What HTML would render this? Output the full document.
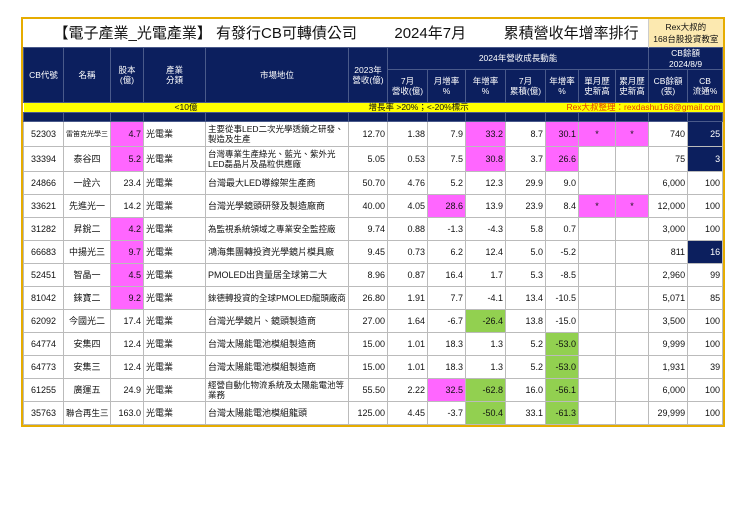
<!DOCTYPE html>
<html><head><meta charset="utf-8"><style>
body{margin:0;background:#fff;width:740px;height:523px;position:relative;font-family:"Liberation Sans","Noto Sans CJK TC",sans-serif;}
.wrap{position:absolute;left:21px;top:17px;border:2px solid #e6ac00;}
table{border-collapse:collapse;table-layout:fixed;width:699px;}
td{padding:0 2px;font-size:9px;color:#111;border:1px solid #bbb;overflow:hidden;white-space:nowrap;line-height:11px;}
.h td{background:#0c1f5e;color:#fff;text-align:center;border:1px solid #4a5a8a;font-size:8.5px;line-height:10.5px;}
.r{text-align:right}.c{text-align:center}
.p{background:#ff66ff}.g{background:#92d050}.n{background:#0c1f5e;color:#fff}
.t td{border:none;background:#fff;font-size:15px;height:28px;}
.y td{background:#ffff00;height:9px;font-size:8.5px;line-height:9px;border:none}
.b td{background:#0c1f5e;height:8px;border:1px solid #4a5a8a}
.d td{height:22px}
.w{white-space:normal;font-size:8.5px;line-height:10.5px}
</style></head><body><div class="wrap">
<table>
<colgroup><col style="width:40px"><col style="width:47px"><col style="width:33px"><col style="width:62px"><col style="width:143px"><col style="width:39px"><col style="width:40px"><col style="width:38px"><col style="width:40px"><col style="width:40px"><col style="width:33px"><col style="width:37px"><col style="width:33px"><col style="width:39px"><col style="width:35px"></colgroup>
<tr class="t"><td colspan="13" style="padding-left:30px">【電子產業_光電產業】 有發行CB可轉債公司 &nbsp; &nbsp; &nbsp; &nbsp; 2024年7月 &nbsp; &nbsp; &nbsp; &nbsp; 累積營收年增率排行</td><td colspan="2" style="background:#fce9b0;font-size:8.5px;text-align:center;line-height:12px;border-left:1px solid #ccc">Rex大叔的<br>168台股投資教室</td></tr>
<tr class="h"><td rowspan="2" style="height:52px">CB代號</td><td rowspan="2">名稱</td><td rowspan="2">股本<br>(億)</td><td rowspan="2">產業<br>分類</td><td rowspan="2">市場地位</td><td rowspan="2">2023年<br>營收(億)</td><td colspan="7" style="height:17px">2024年營收成長動能</td><td colspan="2">CB餘額<br>2024/8/9</td></tr>
<tr class="h"><td style="height:32px">7月<br>營收(億)</td><td>月增率<br>%</td><td>年增率<br>%</td><td>7月<br>累積(億)</td><td>年增率<br>%</td><td>單月歷<br>史新高</td><td>累月歷<br>史新高</td><td>CB餘額<br>(張)</td><td>CB<br>流通%</td></tr>
<tr class="y"><td colspan="5" style="text-align:center">&lt;10億</td><td colspan="5" style="padding-left:20px;overflow:visible">增長率 &gt;20%；&lt;-20%標示</td><td colspan="5" style="color:#e04000;text-align:right;font-size:8.5px;padding-right:2px;overflow:visible">Rex大叔整理：rexdashu168@gmail.com</td></tr>
<tr class="b"><td></td><td></td><td></td><td></td><td></td><td></td><td></td><td></td><td></td><td></td><td></td><td></td><td></td><td></td><td></td></tr>
<tr class="d"><td class="c" style="height:24px">52303</td><td class="c" style="font-size:7px">雷笛克光學三</td><td class="r p">4.7</td><td>光電業</td><td class="w">主要從事LED二次光學透鏡之研發、製造及生產</td><td class="r">12.70</td><td class="r">1.38</td><td class="r">7.9</td><td class="r p">33.2</td><td class="r">8.7</td><td class="r p">30.1</td><td class="c p">*</td><td class="c p">*</td><td class="r">740</td><td class="r n">25</td></tr>
<tr class="d"><td class="c" style="height:24px">33394</td><td class="c">泰谷四</td><td class="r p">5.2</td><td>光電業</td><td class="w">台灣專業生產綠光、藍光、紫外光LED磊晶片及晶粒供應廠</td><td class="r">5.05</td><td class="r">0.53</td><td class="r">7.5</td><td class="r p">30.8</td><td class="r">3.7</td><td class="r p">26.6</td><td></td><td></td><td class="r">75</td><td class="r n">3</td></tr>
<tr class="d"><td class="c">24866</td><td class="c">一詮六</td><td class="r">23.4</td><td>光電業</td><td>台灣最大LED導線架生產商</td><td class="r">50.70</td><td class="r">4.76</td><td class="r">5.2</td><td class="r">12.3</td><td class="r">29.9</td><td class="r">9.0</td><td></td><td></td><td class="r">6,000</td><td class="r">100</td></tr>
<tr class="d"><td class="c">33621</td><td class="c">先進光一</td><td class="r">14.2</td><td>光電業</td><td>台灣光學鏡頭研發及製造廠商</td><td class="r">40.00</td><td class="r">4.05</td><td class="r p">28.6</td><td class="r">13.9</td><td class="r">23.9</td><td class="r">8.4</td><td class="c p">*</td><td class="c p">*</td><td class="r">12,000</td><td class="r">100</td></tr>
<tr class="d"><td class="c">31282</td><td class="c">昇銳二</td><td class="r p">4.2</td><td>光電業</td><td style="font-size:8.5px">為監視系統領域之專業安全監控廠</td><td class="r">9.74</td><td class="r">0.88</td><td class="r">-1.3</td><td class="r">-4.3</td><td class="r">5.8</td><td class="r">0.7</td><td></td><td></td><td class="r">3,000</td><td class="r">100</td></tr>
<tr class="d"><td class="c">66683</td><td class="c">中揚光三</td><td class="r p">9.7</td><td>光電業</td><td>鴻海集團轉投資光學鏡片模具廠</td><td class="r">9.45</td><td class="r">0.73</td><td class="r">6.2</td><td class="r">12.4</td><td class="r">5.0</td><td class="r">-5.2</td><td></td><td></td><td class="r">811</td><td class="r n">16</td></tr>
<tr class="d"><td class="c">52451</td><td class="c">智晶一</td><td class="r p">4.5</td><td>光電業</td><td>PMOLED出貨量居全球第二大</td><td class="r">8.96</td><td class="r">0.87</td><td class="r">16.4</td><td class="r">1.7</td><td class="r">5.3</td><td class="r">-8.5</td><td></td><td></td><td class="r">2,960</td><td class="r">99</td></tr>
<tr class="d"><td class="c">81042</td><td class="c">錸寶二</td><td class="r p">9.2</td><td>光電業</td><td style="font-size:8.5px">錸德轉投資的全球PMOLED龍頭廠商</td><td class="r">26.80</td><td class="r">1.91</td><td class="r">7.7</td><td class="r">-4.1</td><td class="r">13.4</td><td class="r">-10.5</td><td></td><td></td><td class="r">5,071</td><td class="r">85</td></tr>
<tr class="d"><td class="c">62092</td><td class="c">今國光二</td><td class="r">17.4</td><td>光電業</td><td>台灣光學鏡片、鏡頭製造商</td><td class="r">27.00</td><td class="r">1.64</td><td class="r">-6.7</td><td class="r g">-26.4</td><td class="r">13.8</td><td class="r">-15.0</td><td></td><td></td><td class="r">3,500</td><td class="r">100</td></tr>
<tr class="d"><td class="c">64774</td><td class="c">安集四</td><td class="r">12.4</td><td>光電業</td><td>台灣太陽能電池模組製造商</td><td class="r">15.00</td><td class="r">1.01</td><td class="r">18.3</td><td class="r">1.3</td><td class="r">5.2</td><td class="r g">-53.0</td><td></td><td></td><td class="r">9,999</td><td class="r">100</td></tr>
<tr class="d"><td class="c">64773</td><td class="c">安集三</td><td class="r">12.4</td><td>光電業</td><td>台灣太陽能電池模組製造商</td><td class="r">15.00</td><td class="r">1.01</td><td class="r">18.3</td><td class="r">1.3</td><td class="r">5.2</td><td class="r g">-53.0</td><td></td><td></td><td class="r">1,931</td><td class="r">39</td></tr>
<tr class="d"><td class="c">61255</td><td class="c">廣運五</td><td class="r">24.9</td><td>光電業</td><td class="w">經營自動化物流系統及太陽能電池等業務</td><td class="r">55.50</td><td class="r">2.22</td><td class="r p">32.5</td><td class="r g">-62.8</td><td class="r">16.0</td><td class="r g">-56.1</td><td></td><td></td><td class="r">6,000</td><td class="r">100</td></tr>
<tr class="d"><td class="c">35763</td><td class="c" style="font-size:8.5px">聯合再生三</td><td class="r">163.0</td><td>光電業</td><td>台灣太陽能電池模組龍頭</td><td class="r">125.00</td><td class="r">4.45</td><td class="r">-3.7</td><td class="r g">-50.4</td><td class="r">33.1</td><td class="r g">-61.3</td><td></td><td></td><td class="r">29,999</td><td class="r">100</td></tr>
</table></div></body></html>
